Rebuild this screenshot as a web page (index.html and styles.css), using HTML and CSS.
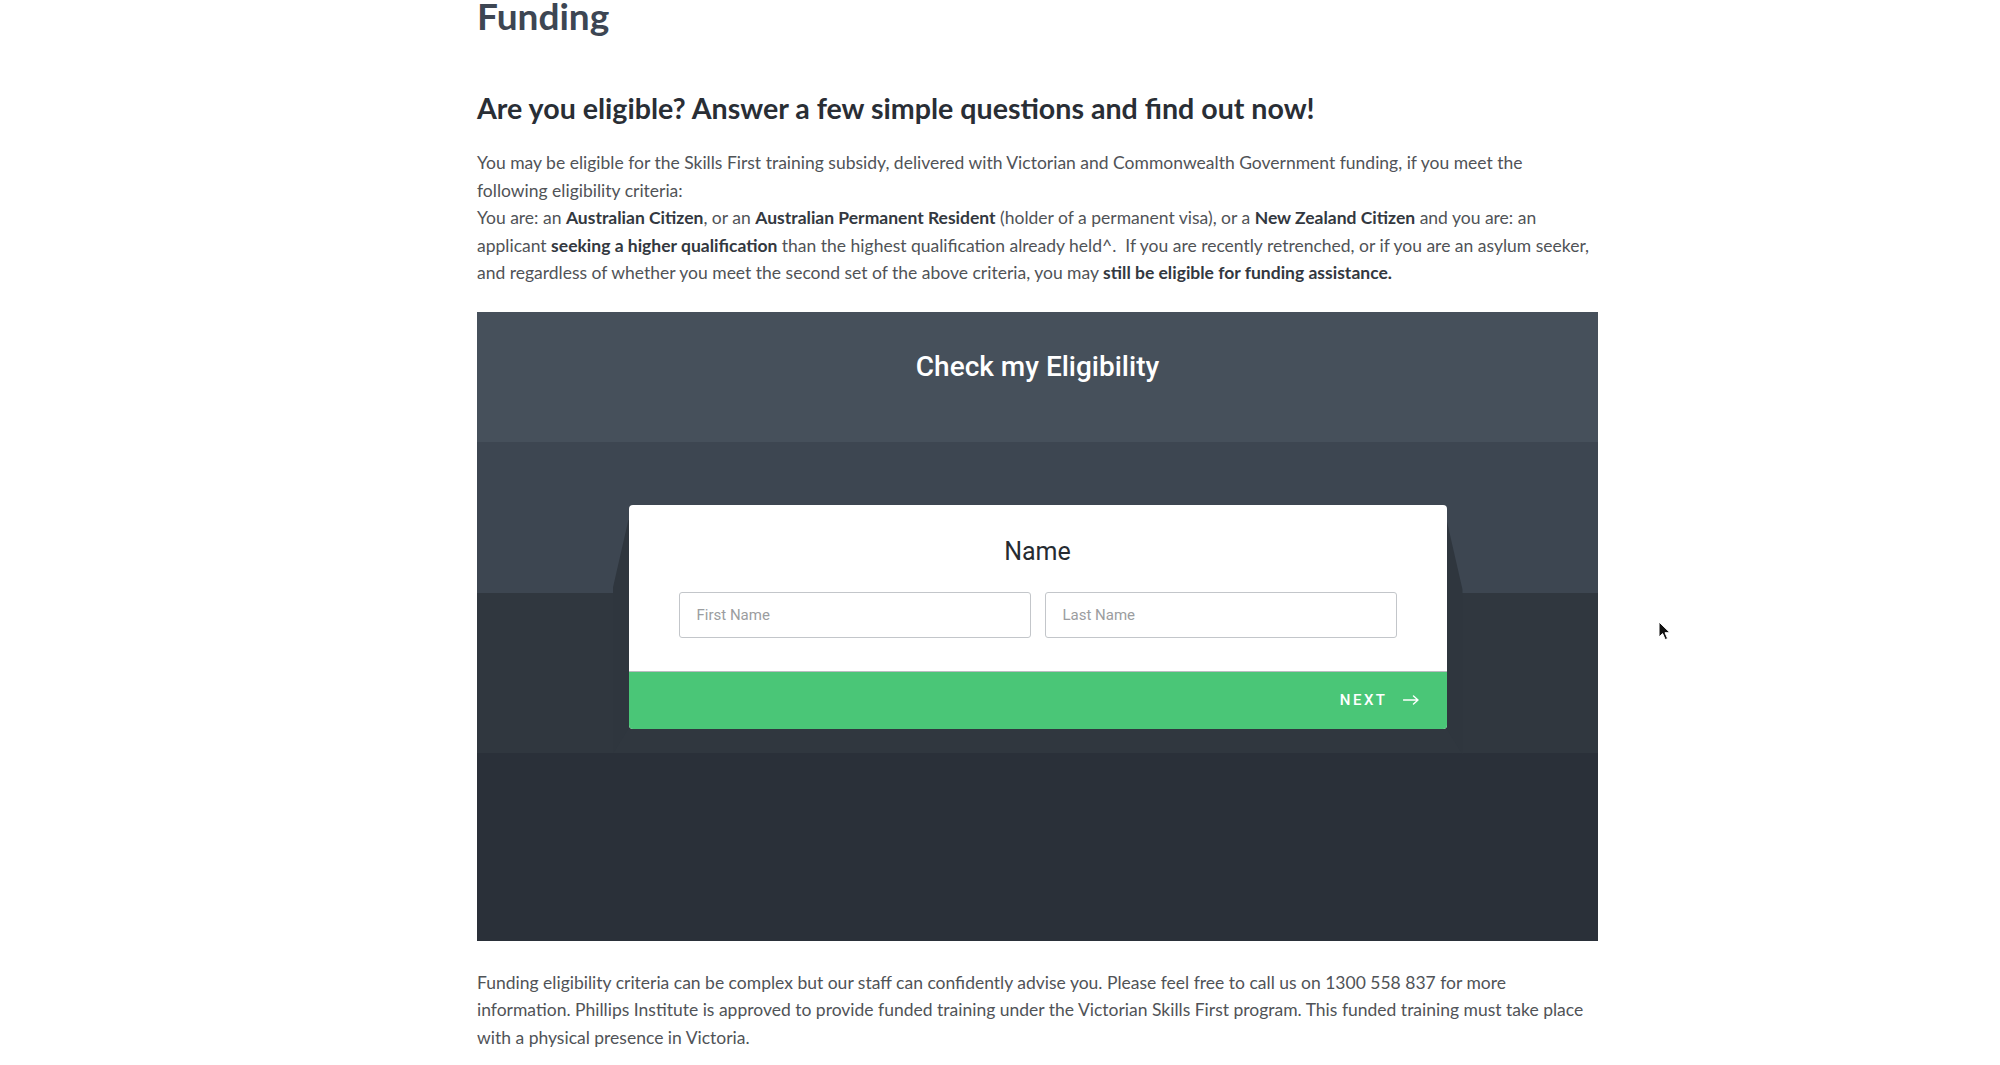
FILE: index.html
```html
<!DOCTYPE html>
<html lang="en">
<head>
<meta charset="utf-8">
<title>Funding</title>
<link rel="stylesheet" href="styles.css">
</head>
<body>
<main class="content">
  <h1 class="page-title">Funding</h1>
  <h2 class="lead">Are you eligible? Answer a few simple questions and find out now!</h2>
  <p class="text">You may be eligible for the Skills First training subsidy, delivered with Victorian and Commonwealth Government funding, if you meet the following eligibility criteria:<br>You are: an <strong>Australian Citizen</strong>, or an <strong>Australian Permanent Resident</strong> (holder of a permanent visa), or a <strong>New Zealand Citizen</strong> and you are: an applicant <strong>seeking a higher qualification</strong> than the highest qualification already held^.&nbsp; If you are recently retrenched, or if you are an asylum seeker, and regardless of whether you meet the second set of the above criteria, you may <strong>still be eligible for funding assistance.</strong></p>

  <section class="checker">
    <h3 class="checker-title">Check my Eligibility</h3>
    <div class="card">
      <div class="card-body">
        <div class="card-label">Name</div>
        <div class="fields">
          <input class="field" type="text" placeholder="First Name">
          <input class="field" type="text" placeholder="Last Name">
        </div>
      </div>
      <div class="card-foot">
        <button class="next" type="button">NEXT
          <svg class="next-arrow" width="16" height="10" viewBox="0 0 16 10"><path d="M0.5 5H15M10.5 1L15 5L10.5 9" fill="none" stroke="#fff" stroke-width="1.4" stroke-linecap="round" stroke-linejoin="round"/></svg>
        </button>
      </div>
    </div>
  </section>

  <p class="text after">Funding eligibility criteria can be complex but our staff can confidently advise you. Please feel free to call us on 1300 558 837 for more information. Phillips Institute is approved to provide funded training under the Victorian Skills First program. This funded training must take place with a physical presence in Victoria.</p>
</main>
<svg class="cursor" width="13" height="20" viewBox="0 0 13 20"><path d="M1 1V16L4.6 12.6L7.2 18.6L9.6 17.6L7 11.7H12Z" fill="#111" stroke="#fff" stroke-width="1"/></svg>
</body>
</html>
```

FILE: styles.css
```css
* { box-sizing: border-box; }

html, body {
  margin: 0;
  padding: 0;
  background: #ffffff;
}

body {
  font-family: "Lato", "Liberation Sans", sans-serif;
  color: #4d4f53;
  width: 2000px;
  height: 1065px;
  overflow: hidden;
  position: relative;
}

.content {
  width: 1121px;
  margin-left: 477px;
}

.page-title {
  margin: -6px 0 0;
  font-size: 37px;
  line-height: 44px;
  font-weight: 700;
  color: #3d4653;
}

.lead {
  margin: 52px 0 0;
  font-size: 28.6px;
  line-height: 36px;
  font-weight: 700;
  color: #292e35;
}

.text {
  max-width: 1115px;
  margin: 23px 0 0;
  font-size: 17.5px;
  line-height: 27.5px;
  color: #505357;
}

.text strong {
  font-weight: 700;
  color: #333840;
}

.checker {
  isolation: isolate;
  margin-top: 25px;
  height: 629px;
  padding-top: 38px;
  background: linear-gradient(to bottom,
    #46505b 0, #46505b 130px,
    #3d4651 130px, #3d4651 281px,
    #30373f 281px, #30373f 441px,
    #2a3039 441px, #2a3039 100%);
  font-family: "Roboto", "Liberation Sans", sans-serif;
}

.checker-title {
  margin: 0;
  text-align: center;
  font-size: 28px;
  line-height: 34px;
  font-weight: 500;
  color: #ffffff;
}

.card {
  position: relative;
  width: 818px;
  margin: 121px auto 0;
  border-radius: 4px;
  background: #ffffff;
}

.card::before {
  content: "";
  position: absolute;
  top: 15px;
  bottom: -26px;
  left: -16px;
  right: -16px;
  z-index: -1;
  background: #2f363e;
  clip-path: polygon(16px 0, 0 70px, 0 100%, 16px calc(100% - 26px), calc(100% - 16px) calc(100% - 26px), 100% 100%, 100% 70px, calc(100% - 16px) 0);
}

.card-body {
  padding: 32px 50px 33px;
  border-bottom: 1px solid #b9bcc0;
  border-radius: 4px 4px 0 0;
}

.card-label {
  text-align: center;
  font-size: 25px;
  line-height: 30px;
  font-weight: 400;
  color: #262b31;
}

.fields {
  display: flex;
  gap: 14px;
  margin-top: 25px;
}

.field {
  flex: 1;
  height: 46px;
  padding: 0 17px;
  border: 1px solid #c3c6ca;
  border-radius: 3px;
  font-family: "Roboto", "Liberation Sans", sans-serif;
  font-size: 15px;
  color: #333;
  background: #fff;
  outline: none;
}

.field::placeholder {
  color: #9b9da0;
}

.card-foot {
  height: 57px;
  display: flex;
  justify-content: flex-end;
  align-items: center;
  padding-right: 28px;
  background: #4ac677;
  border-radius: 0 0 4px 4px;
}

.next {
  display: flex;
  align-items: center;
  gap: 15px;
  padding: 0;
  border: 0;
  background: none;
  font-family: "Roboto", "Liberation Sans", sans-serif;
  font-size: 15px;
  font-weight: 500;
  letter-spacing: 2.5px;
  color: #ffffff;
  cursor: pointer;
}

.next-arrow {
  display: block;
}

.after {
  margin-top: 28px;
}

.cursor {
  position: absolute;
  left: 1658px;
  top: 621px;
}
```
